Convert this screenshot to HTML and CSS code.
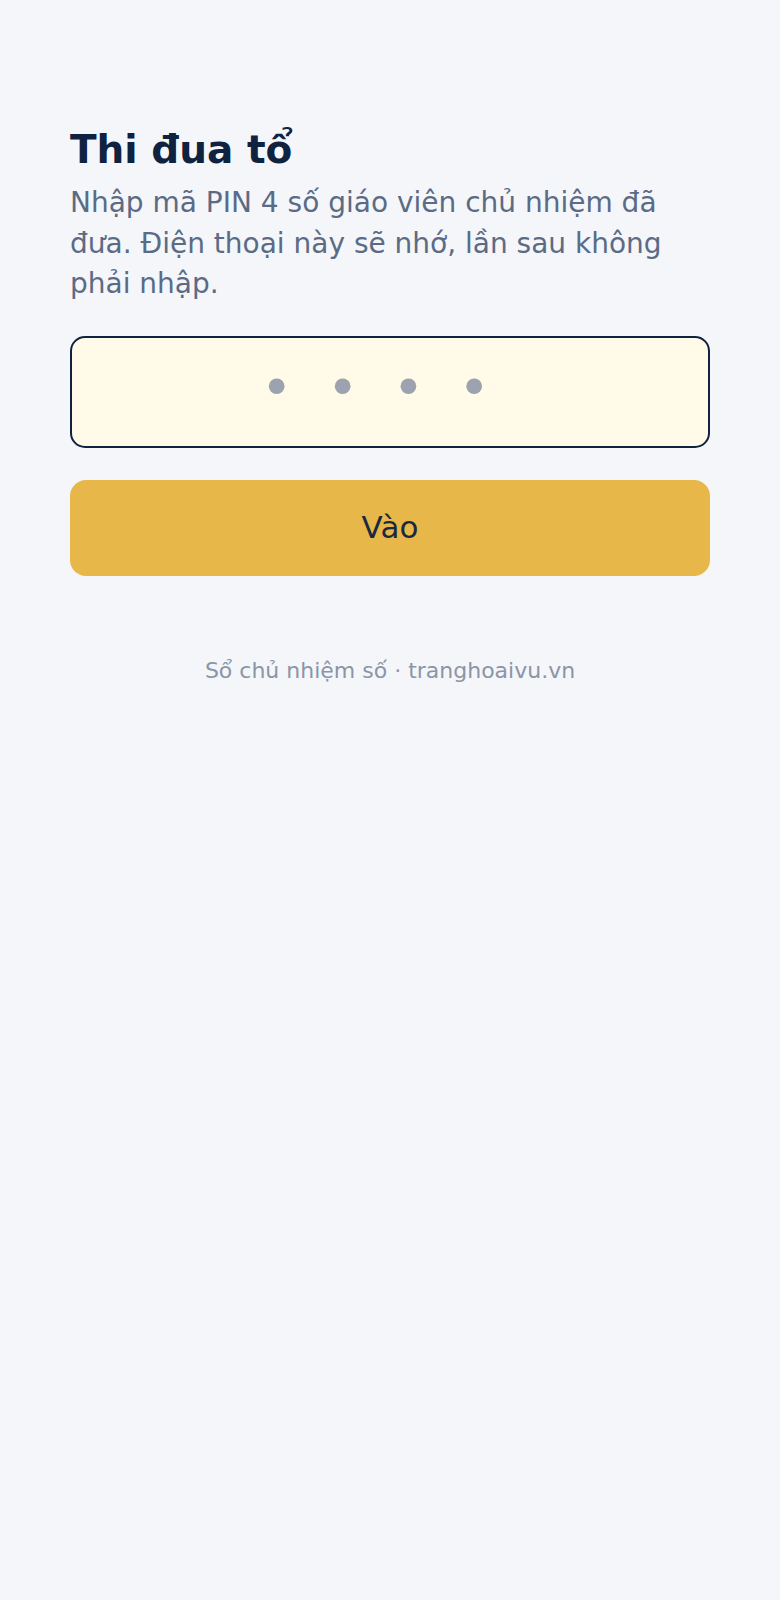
FILE: index.html
```html
<!DOCTYPE html>
<html lang="vi">
<head>
    <meta charset="utf-8">
    <title>Thi đua tổ</title>
    <link rel="stylesheet" href="styles.css">
</head>
<body>
<div class="login">
    <h1 class="login-title">Thi đua tổ</h1>
    <p class="login-hint">Nhập mã PIN 4 số giáo viên chủ nhiệm đã đưa. Điện thoại này sẽ nhớ, lần sau không phải nhập.</p>
    <form class="login-form">
        <input class="pin-input" type="password" inputmode="numeric" maxlength="4" placeholder="••••">
        <button class="login-btn" type="button">Vào</button>
    </form>
    <div class="login-footer">Sổ chủ nhiệm số · tranghoaivu.vn</div>
</div>
</body>
</html>
```

FILE: styles.css
```css
html, body {
    margin: 0;
    padding: 0;
    background: #f4f6fa;
}

body {
    font-family: "DejaVu Sans", sans-serif;
    color: #0f2340;
}

.login {
    max-width: 640px;
    margin: 0 auto;
    padding-top: 126px
}

.login-title {
    margin: 0;
    font-size: 39px;
    line-height: 48px;
    font-weight: 700;
    color: #0f2340
}

.login-hint {
    margin: 9px 0 0;
    font-size: 28px;
    line-height: 1.45;
    color: #5b6b85
}

.login-form {
    margin-top: 31px;
    display: flex;
    flex-direction: column;
    gap: 32px
}

.pin-input {
    box-sizing: border-box;
    width: 100%;
    height: 112px;
    border: 2px solid #0f2340;
    border-radius: 15px;
    background: #fffbe8;
    font-family: "DejaVu Sans", sans-serif;
    font-size: 54px;
    letter-spacing: 34px;
    text-align: center;
    color: #0f2340;
    outline: none;
    padding: 0 0 8px 5px
}

.pin-input::placeholder {
    color: #9ca3af
}

.login-btn {
    height: 96px;
    border: none;
    border-radius: 16px;
    background: #e8b749;
    color: #1b2940;
    font-family: "DejaVu Sans", sans-serif;
    font-size: 31px;
    padding-bottom: 2px
}

.login-footer {
    margin-top: 78px;
    text-align: center;
    font-size: 22px;
    line-height: 1.5;
    color: #8a95a8
}
```
